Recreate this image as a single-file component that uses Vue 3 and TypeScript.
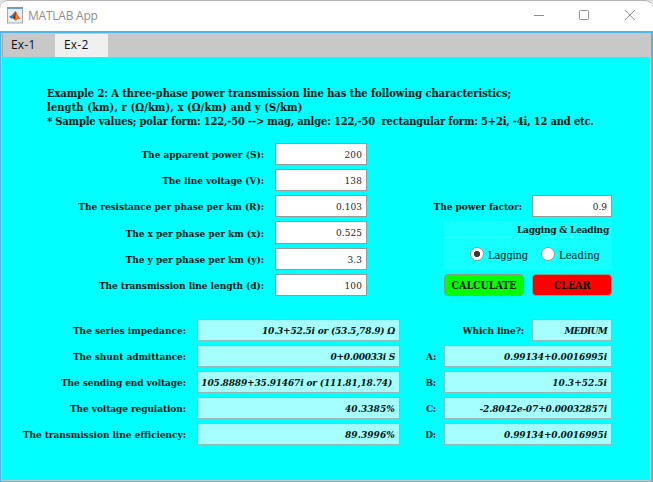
<script setup lang="ts">
import { ref } from 'vue'

interface Field {
  label: string
  value: string
  /** letter tracking of the label and of the value, in px */
  lt: number
  vt: number
}

const intro = [
  { text: 'Example 2: A three-phase power transmission line has the following characteristics;', t: -0.04 },
  { text: 'length (km), r (Ω/km), x (Ω/km) and y (S/km)', t: 0.12 },
  { text: '* Sample values; polar form: 122,-50 --> mag, anlge: 122,-50  rectangular form: 5+2i, -4i, 12 and etc.', t: -0.15 },
]

const inputs = ref<Field[]>([
  { label: 'The apparent power (S):', value: '200', lt: 0, vt: 0.1 },
  { label: 'The line voltage (V):', value: '138', lt: -0.05, vt: 0.1 },
  { label: 'The resistance per phase per km (R):', value: '0.103', lt: -0.05, vt: 0.05 },
  { label: 'The x per phase per km (x):', value: '0.525', lt: -0.02, vt: 0.05 },
  { label: 'The y per phase per km (y):', value: '3.3', lt: -0.01, vt: 0.1 },
  { label: 'The transmission line length (d):', value: '100', lt: -0.05, vt: 0.1 },
])

const results: Field[] = [
  { label: 'The series impedance:', value: '10.3+52.5i or (53.5,78.9) Ω', lt: 0, vt: -0.2 },
  { label: 'The shunt admittance:', value: '0+0.00033i S', lt: -0.06, vt: -0.25 },
  { label: 'The sending end voltage:', value: '105.8889+35.91467i or (111.81,18.74) ', lt: -0.07, vt: -0.15 },
  { label: 'The voltage regulation:', value: '40.3385%', lt: -0.08, vt: 0.1 },
  { label: 'The transmission line efficiency:', value: '89.3996%', lt: -0.05, vt: 0.1 },
]

const constants: Field[] = [
  { label: 'Which line?:', value: 'MEDIUM', lt: -0.12, vt: -0.7 },
  { label: 'A:', value: '0.99134+0.0016995i', lt: -0.2, vt: -0.1 },
  { label: 'B:', value: '10.3+52.5i', lt: -0.2, vt: 0 },
  { label: 'C:', value: '-2.8042e-07+0.00032857i', lt: -0.2, vt: -0.13 },
  { label: 'D:', value: '0.99134+0.0016995i', lt: -0.2, vt: -0.1 },
]

const mode = ref<'Lagging' | 'Leading'>('Lagging')
const modes = ['Lagging', 'Leading'] as const
const track = (n: number) => ({ letterSpacing: n + 'px' })
</script>

<template>
  <div class="window">
    <header class="titlebar">
      <svg class="logo" width="16" height="17" viewBox="0 0 16 17">
        <rect x=".5" y=".5" width="15" height="15.500" fill="#e9edf2" stroke="#a3adb8" />
        <rect x="0" y="0" width="16" height="2" fill="#6f9cc2" />
        <path d="M2 9.800 5.200 8l2 1.600-2.300 2.200z" fill="#2c79b8" />
        <path d="M5.200 8 8.400 4.200 7.600 8.800 6 10.400z" fill="#3d5f86" />
        <path d="M8.600 3.800c1.200 1.800 2.600 6 5 8.500-1.600-.9-2.500-.9-3.400.2-.8 1-1.400 1.100-2.100.9-.6-1.500-1.200-2.200-2.900-2L7 9.700z" fill="#d9531e" />
        <path d="M8.600 3.800c.3 2.400-.1 6-1.100 9-.4-1-1-1.500-1.700-1.900L7.400 9z" fill="#8c2a14" />
        <path d="M8.900 5c.8 2 1.300 4.200 2.100 6.200-.9.300-1.400 1.200-2.200 1.600z" fill="#f08a24" />
      </svg>
      <span class="title">MATLAB App</span>
      <svg class="controls" width="104" height="12" viewBox="0 0 104 12" fill="none" stroke="#8f8f8f">
        <path d="M1 6.500H11" />
        <rect x="46.500" y="1.500" width="9" height="9" rx="1" />
        <path d="M92 1.200l9.800 9.800M101.800 1.200L92 11" />
      </svg>
    </header>

    <div class="client">
      <nav class="tabs">
        <button class="tab">Ex-1</button>
        <button class="tab active">Ex-2</button>
      </nav>

      <main class="panel">
        <div class="intro">
          <div v-for="line in intro" :key="line.text" :style="track(line.t)">{{ line.text }}</div>
        </div>

        <section class="upper">
          <div class="rows inputs">
            <div v-for="f in inputs" :key="f.label" class="row">
              <label :style="track(f.lt)">{{ f.label }}</label>
              <div class="field" :style="track(f.vt)">{{ f.value }}</div>
            </div>
          </div>

          <div class="side">
            <div class="row factor">
              <label>The power factor:</label>
              <div class="field">0.9</div>
            </div>
            <div class="group">
              <div class="group-title">Lagging &amp; Leading</div>
              <div class="radios">
                <div v-for="m in modes" :key="m" class="radio" @click="mode = m">
                  <span class="dot" :class="{ on: mode === m }"></span>
                  <span class="name" :class="m.toLowerCase()">{{ m }}</span>
                </div>
              </div>
            </div>
            <div class="buttons">
              <button class="calc">CALCULATE</button>
              <button class="clear">CLEAR</button>
            </div>
          </div>
        </section>

        <section class="lower">
          <div class="rows outputs">
            <div v-for="f in results" :key="f.label" class="row">
              <label :style="track(f.lt)">{{ f.label }}</label>
              <div class="field out" :style="track(f.vt)">{{ f.value }}</div>
            </div>
          </div>
          <div class="rows constants">
            <div v-for="f in constants" :key="f.label" class="row">
              <label :style="track(f.lt)">{{ f.label }}</label>
              <div class="field out" :style="track(f.vt)">{{ f.value }}</div>
            </div>
          </div>
        </section>
      </main>
    </div>
  </div>
</template>

<style>
body {
  margin: 0;
  overflow: hidden;
  background: #e4e4e4;
}
</style>

<style scoped>
.window {
  width: 653px;
  height: 482px;
  box-sizing: border-box;
  display: flex;
  flex-direction: column;
  border-top: 1px solid #b5b5b5;
  border-radius: 8px 8px 0 0;
  overflow: hidden;
  background: #fff;
  font: bold 10px/14px "DejaVu Serif Condensed", "DejaVu Serif", serif;
  color: #001414;
}
.titlebar {
  height: 30px;
  flex: none;
  display: flex;
  align-items: center;
  padding: 0 16px 0 7px;
}
.logo {
  flex: none;
  margin-top: -2px;
}
.title {
  margin-left: 5px;
  flex: 1;
  font: 12px/16px "Open Sans", sans-serif;
  letter-spacing: -0.24px;
  color: #8e8e8e;
}
.controls {
  margin-top: -2px;
}
.client {
  flex: 1;
  display: flex;
  flex-direction: column;
  border: solid #4db8e8;
  border-width: 2px 2px 1px 1px;
  min-height: 0;
}
.tabs {
  height: 24px;
  flex: none;
  display: flex;
  box-sizing: border-box;
  padding: 1px 0 0 1px;
  background: #c8c8c8;
}
.tab {
  width: 53px;
  height: 23px;
  box-sizing: border-box;
  border: 0;
  border-left: 1px solid #a8a8a8;
  padding: 0 0 1px 8px;
  text-align: left;
  font: 12px/20px "Open Sans", sans-serif;
  letter-spacing: 0.2px;
  background: #c8c8c8;
  color: #111;
}
.tab.active {
  border-left-color: #f0f0f0;
  background: #f0f0f0;
}
.panel {
  flex: 1;
  min-height: 0;
  box-sizing: border-box;
  padding: 30px 38px 0 0;
  border: 1px solid #c8c8c8;
  border-width: 0 1px 1px;
  background: #0ff;
}
.intro {
  padding-left: 45px;
  font-size: 11px;
  white-space: pre;
}
.upper {
  display: flex;
  justify-content: space-between;
  margin-top: 14px;
}
.lower {
  display: flex;
  justify-content: space-between;
  margin-top: 23px;
}
.rows {
  display: flex;
  flex-direction: column;
  gap: 4px;
}
.row {
  display: flex;
  justify-content: flex-end;
  align-items: center;
}
label {
  white-space: pre;
  margin-right: 11px;
  padding-top: 2px;
}
.inputs {
  width: 365px;
}
.outputs {
  width: 398px;
}
.constants {
  width: 190px;
}
.field {
  width: 92px;
  height: 22px;
  flex: none;
  box-sizing: border-box;
  border: 1px solid #989898;
  padding-right: 4px;
  font-weight: normal;
  line-height: 22px;
  text-align: right;
  white-space: pre;
  background: #fff;
  color: #1c1c1c;
}
.inputs .row:nth-child(4) .field {
  height: 23px;
}
.field.out {
  width: 168px;
  background: #a6ffff;
  border-color: #98b8b8;
  font-style: italic;
  font-weight: bold;
  color: #001414;
}
.outputs .field.out {
  width: 203px;
}
.constants label {
  margin-right: 8px;
}
.constants .row:first-child .field {
  width: 80px;
}
.side {
  width: 190px;
  padding-top: 52px;
  display: flex;
  flex-direction: column;
  align-items: flex-end;
}
.factor label {
  letter-spacing: -0.04px;
  margin-right: 10px;
}
.factor .field {
  width: 80px;
}
.group {
  width: 168px;
  height: 49px;
  margin: 4px 0;
  background: #14ffff;
}
.group-title {
  height: 17px;
  box-sizing: border-box;
  padding-right: 3px;
  line-height: 17px;
  letter-spacing: -0.22px;
  text-align: right;
  border-bottom: 1px solid #c8d8d8;
}
.radios {
  display: flex;
  padding: 9px 0 0 26px;
  font-size: 11px;
  font-weight: normal;
}
.radio {
  width: 72px;
  display: flex;
  align-items: center;
  gap: 4px;
}
.name {
  padding-top: 2px;
  margin-bottom: -2px;
  line-height: 14px;
}
.lagging {
  letter-spacing: -0.14px;
}
.leading {
  letter-spacing: 0.07px;
}
.dot {
  width: 14px;
  height: 14px;
  flex: none;
  box-sizing: border-box;
  border: 1px solid #8a9a9a;
  border-radius: 50%;
  background: #fff;
}
.dot.on {
  background: radial-gradient(circle, #3c3c3c 2.8px, #fff 3.5px);
}
.buttons {
  display: flex;
  gap: 8px;
}
.buttons button {
  width: 80px;
  height: 22px;
  padding: 0;
  box-sizing: border-box;
  border: 1px solid #8a9a8a;
  border-radius: 4px;
  font: inherit;
  font-size: 10.500px;
  line-height: 20px;
  color: #001400;
}
.buttons .calc {
  background: #0f0;
}
.buttons .clear {
  background: #f00;
}
</style>
